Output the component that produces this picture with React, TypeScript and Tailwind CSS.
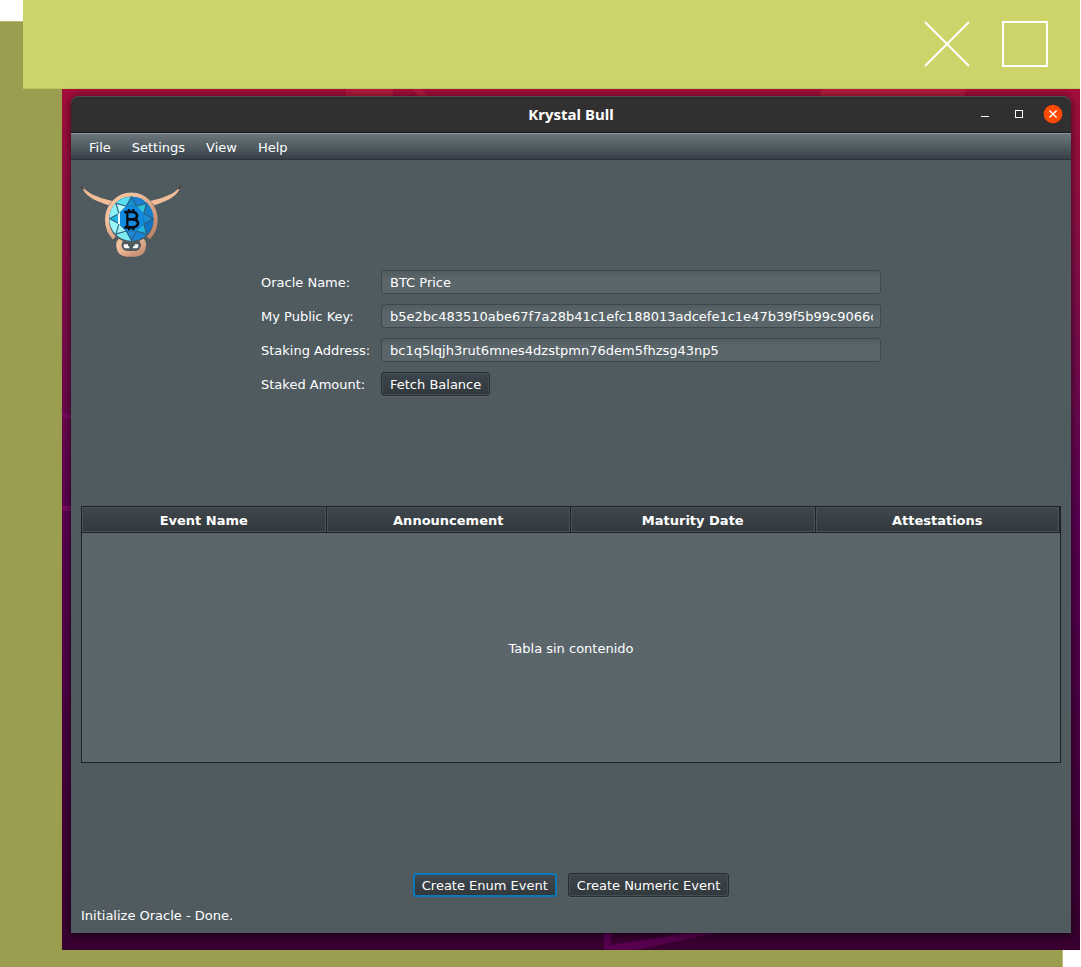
import type { ReactNode } from 'react';

const fields = [
  { id: 'oracle-name', label: 'Oracle Name:', value: 'BTC Price' },
  {
    id: 'public-key',
    label: 'My Public Key:',
    value: 'b5e2bc483510abe67f7a28b41c1efc188013adcefe1c1e47b39f5b99c9066c',
  },
  {
    id: 'staking-address',
    label: 'Staking Address:',
    value: 'bc1q5lqjh3rut6mnes4dzstpmn76dem5fhzsg43np5',
  },
];

const menus = ['File', 'Settings', 'View', 'Help'];
const columns = ['Event Name', 'Announcement', 'Maturity Date', 'Attestations'];

// Facet colours, clockwise from the right-hand side of the gem.
const tipColors = ['#1a8fd8', '#22b4e0', '#1b86d4', '#a4f4f8', '#1fb4e4', '#b8fbfa', '#1493cf', '#29c3dc'];
const edgeColors = ['#1272c4', '#1a84d4', '#7cebf4', '#9cf6f8', '#8df0f6', '#57dcf0', '#1b7fd0', '#1480cc'];

function gemPoint(radius: number, degrees: number) {
  const angle = (degrees * Math.PI) / 180;
  return `${(184 + radius * Math.cos(angle)).toFixed(1)},${(131 + radius * Math.sin(angle)).toFixed(1)}`;
}

function Gem() {
  return (
    <g stroke="#2d5c76" strokeWidth="2.5" strokeLinejoin="round">
      <circle cx="184" cy="131" r="66" fill="#1688d8" stroke="none" />
      {edgeColors.map((color, i) => (
        <g key={color + i}>
          <path
            d={`M${gemPoint(66, i * 45)}A66 66 0 0 1 ${gemPoint(66, i * 45 + 45)}L${gemPoint(40, i * 45 + 22.5)}Z`}
            fill={color}
            stroke="none"
          />
          <path
            d={`M${gemPoint(66, i * 45)}L${gemPoint(40, i * 45 + 22.5)}L${gemPoint(66, i * 45 + 45)}`}
            fill="none"
          />
        </g>
      ))}
      {tipColors.map((color, i) => (
        <polygon
          key={color}
          points={`${gemPoint(64, i * 45)} ${gemPoint(40, i * 45 + 22.5)} ${gemPoint(40, i * 45 - 22.5)}`}
          fill={color}
        />
      ))}
      <polygon
        points={[0, 1, 2, 3, 4, 5, 6, 7].map((i) => gemPoint(40, i * 45 + 22.5)).join(' ')}
        fill="#128ae0"
        stroke="none"
      />
      <path d="M144 116l6-3v36l-6-3z" fill="#effcff" stroke="none" />
    </g>
  );
}

function BullLogo() {
  return (
    <svg viewBox="33 21 300 234" className="h-[78px] w-[100px]" role="img" aria-label="Krystal Bull logo">
      <defs>
        <linearGradient id="skin" x1="0" y1="0" x2="1" y2="1">
          <stop offset="0.3" stopColor="#f2c09c" />
          <stop offset="1" stopColor="#b97f66" />
        </linearGradient>
      </defs>
      <path d="M33 29 Q40 54 64 69 Q84 81 115 91 L127 78 Q94 72 64 57 Q46 47 33 29Z" fill="#f2bd99" />
      <path d="M333 29 Q328 54 304 69 Q284 81 253 91 L241 78 Q274 72 304 57 Q322 47 333 29Z" fill="#f2bd99" />
      <path d="M33 28l2 12 8 5-4-9zM333 28l-2 12-8 5 4-9z" fill="#3b2b30" />
      <path d="M133 189A73 76 0 1 1 235 189" fill="none" stroke="url(#skin)" strokeWidth="12" />
      <Gem />
      <g fill="none" stroke="#050b11" strokeWidth="8">
        <path d="M163 111H188Q201 112 201 122Q201 132 188 133H171M188 133Q204 134 204 145Q204 156 188 157H163" />
        <path d="M172 111V157M177 102V111M190 102V111M177 157V166M190 157V166" strokeWidth="7" />
      </g>
      <path
        d="M146 191Q135 203 140 219Q143 243 170 245H197Q224 243 227 219Q232 203 221 191L208 198Q217 210 210 219Q207 227 196 228H172Q160 227 157 219Q151 210 159 198Z"
        fill="url(#skin)"
      />
      <path d="M161 208h13v6h4v6h-11q-6 0-6-6zM205 208h-11v6h-5v6h11q5 0 5-6z" fill="#fff" />
    </svg>
  );
}

function ActionButton({ children, focused = false }: { children: ReactNode; focused?: boolean }) {
  return (
    <button
      type="button"
      className={
        focused
          ? 'flex h-6 items-center rounded-[3px] border-2 border-[#0d78b8] bg-linear-to-b from-[#414951] to-[#32393c] px-[7px] pt-0.5 leading-[18px]'
          : 'flex h-6 items-center rounded-[3px] border border-[#252d33] bg-linear-to-b from-[#3d454d] to-[#32393c] px-2 pt-0.5 leading-[18px] shadow-[inset_0_0_0_1px_#454e55,0_1px_0_#5d676c]'
      }
    >
      {children}
    </button>
  );
}

function TitleBar() {
  return (
    <header className="grid h-[37px] grid-cols-[1fr_auto_1fr] items-center rounded-t-lg border-t border-b border-t-[#504d4d] border-b-[#1e1b1c] bg-[#322f30] pb-0.5">
      <h1 className="col-start-2 font-['Noto_Sans',sans-serif] text-[15px] leading-5 font-bold">Krystal Bull</h1>
      <div className="flex items-center justify-end gap-[14px] pr-2">
        <button type="button" aria-label="Minimize" className="flex size-5 items-center justify-center">
          <svg viewBox="0 0 20 20" className="size-5">
            <path d="M6 12.5h8" stroke="#fff" />
          </svg>
        </button>
        <button type="button" aria-label="Maximize" className="flex size-5 items-center justify-center">
          <svg viewBox="0 0 20 20" className="size-5">
            <rect x="6.5" y="6.5" width="7" height="7" fill="none" stroke="#fff" />
          </svg>
        </button>
        <button type="button" aria-label="Close" className="flex size-5 items-center justify-center">
          <svg viewBox="0 0 20 20" className="size-5">
            <circle cx="10" cy="10" r="9.3" fill="#fe4a04" />
            <path d="M6.4 6.4l7.2 7.2M13.6 6.4l-7.2 7.2" stroke="#fff" strokeWidth="1.4" />
          </svg>
        </button>
      </div>
    </header>
  );
}

function OracleWindow() {
  return (
    <main className="flex flex-1 flex-col rounded-t-lg bg-[#505b60] font-['DejaVu_Sans',sans-serif] text-[13px] text-white shadow-[0_1px_9px_1px_rgba(0,0,0,0.55)]">
      <TitleBar />
      <nav className="flex h-[27px] items-center gap-[21px] border-t border-b border-t-[#8b9499] border-b-[#2b3136] bg-linear-to-b from-[#6a767b] via-[#525d63] to-[#363e47] pt-0.5 pl-[18px]">
        {menus.map((menu) => (
          <button key={menu} type="button" className="leading-5">
            {menu}
          </button>
        ))}
      </nav>

      <div className="flex flex-1 flex-col px-[10px] pb-[6px]">
        <div className="pt-[22px] pb-[10px]">
          <BullLogo />
        </div>

        <form className="mx-auto flex w-full max-w-[620px] grow flex-col gap-[10px]">
          {fields.map((field) => (
            <div key={field.id} className="flex h-6 items-center">
              <label htmlFor={field.id} className="w-[120px] shrink-0 pt-0.5 leading-[22px]">
                {field.label}
              </label>
              <input
                id={field.id}
                type="text"
                readOnly
                defaultValue={field.value}
                className="h-6 min-w-0 flex-1 rounded-[3px] border border-[#3e474d] bg-linear-to-b from-[#515c60] via-[#5a656a] via-30% to-[#5b666b] pr-[7px] pl-2 outline-none"
              />
            </div>
          ))}
          <div className="flex h-6 items-center">
            <span className="w-[120px] shrink-0 pt-0.5 leading-[22px]">Staked Amount:</span>
            <ActionButton>Fetch Balance</ActionButton>
          </div>
        </form>

        <table className="h-[257px] w-full table-fixed border-separate border-spacing-0 border border-[#1c2226] bg-[#5b666b]">
          <thead>
            <tr>
              {columns.map((column) => (
                <th
                  key={column}
                  scope="col"
                  className="h-[26px] border-r border-b border-[#1c2226] bg-linear-to-b from-[#3f474e] to-[#33393c] p-0 pt-0.5 font-bold shadow-[inset_0_0_0_1px_#4a5358]"
                >
                  {column}
                </th>
              ))}
            </tr>
          </thead>
          <tbody>
            <tr>
              <td colSpan={4} className="p-0 pt-0.5 text-center">
                Tabla sin contenido
              </td>
            </tr>
          </tbody>
        </table>

        <div className="flex grow items-end justify-center gap-[11px]">
          <ActionButton focused>Create Enum Event</ActionButton>
          <ActionButton>Create Numeric Event</ActionButton>
        </div>
        <p className="mt-2 leading-[22px]">Initialize Oracle - Done.</p>
      </div>
    </main>
  );
}

function Wallpaper({ children }: { children: ReactNode }) {
  return (
    <div className="mr-px mb-[17px] ml-[62px] grid flex-1 bg-linear-to-b from-[#a50e3a] via-[#5a0052] via-50% to-[#380030]">
      <div className="col-start-1 row-start-1 flex flex-col overflow-hidden">
        <svg viewBox="0 0 1018 7" preserveAspectRatio="none" className="h-[7px] w-full" aria-hidden="true">
          <path d="M284 0h47v7h-47z M350 0h9l7 7h-9z M760 0h145l-3 7H758z" fill="#b51b40" />
        </svg>
        <svg viewBox="0 0 9 100" className="mt-[316px] mb-auto h-[100px] w-[9px]" aria-hidden="true">
          <path d="M0 0l9 3v5l-9-3z M0 94h9v5H0z" fill="#7a0a60" />
        </svg>
        <svg viewBox="0 0 1018 17" preserveAspectRatio="none" className="h-[17px] w-full" aria-hidden="true">
          <path d="M542 0h7v12l76-12h28l-79 17h-32z" fill="#57004f" />
        </svg>
      </div>
      <div className="col-start-1 row-start-1 flex px-[9px] pt-[7px] pb-[17px]">{children}</div>
    </div>
  );
}

export default function App() {
  return (
    <div className="grid min-h-screen overflow-hidden bg-white">
      <div className="col-start-1 row-start-1 mt-[21px] mr-[18px] border-t border-r border-[#b8bb78] bg-[#9b9e4f]" />
      <div className="col-start-1 row-start-1 flex flex-col">
        <div className="mr-px ml-[23px] flex h-[89px] items-center justify-end gap-8 border-b border-[#bfc760] bg-[#ccd369] pr-8">
          <button type="button" aria-label="Close panel" className="size-[46px]">
            <svg viewBox="0 0 46 46" className="size-full">
              <path d="M1 1l44 44M45 1L1 45" stroke="#fff" strokeWidth="2" />
            </svg>
          </button>
          <button type="button" aria-label="Expand panel" className="size-[46px] border-2 border-white" />
        </div>
        <Wallpaper>
          <OracleWindow />
        </Wallpaper>
      </div>
    </div>
  );
}
